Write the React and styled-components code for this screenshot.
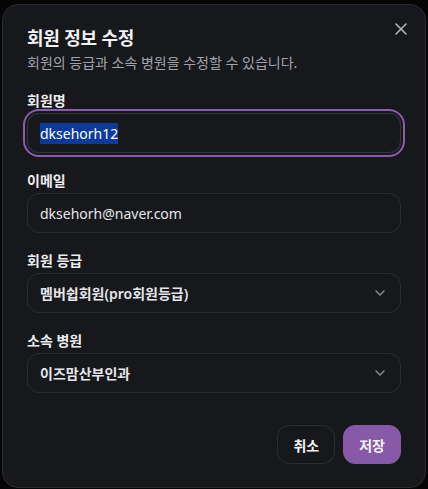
import React from 'react';
import styled, { createGlobalStyle } from 'styled-components';

const GlobalStyle = createGlobalStyle`
  html, body {
    margin: 0;
    padding: 0;
    background: #050506;
  }
  body {
    font-family: "Noto Sans", "Noto Sans CJK KR", sans-serif;
    -webkit-font-smoothing: antialiased;
  }
`;

const Page = styled.div`
  width: 428px;
  height: 489px;
  padding: 4px 2px 0 2px;
  box-sizing: border-box;
  overflow: hidden;
`;

const Dialog = styled.div`
  position: relative;
  box-sizing: border-box;
  width: 424px;
  padding: 24px 24px 23px 24px;
  background: #17181c;
  border: 1px solid #2a2b30;
  border-radius: 16px;
  display: flex;
  flex-direction: column;
`;

const Header = styled.div`
  display: flex;
  flex-direction: column;
  gap: 6px;
  margin-bottom: 18px;
`;

const Title = styled.h2`
  margin: 0;
  height: 18px;
  font-size: 18px;
  line-height: 18px;
  font-weight: 700;
  color: #f2f2f4;
  letter-spacing: -0.2px;
`;

const Subtitle = styled.p`
  margin: 0;
  height: 20px;
  font-size: 14px;
  line-height: 20px;
  color: #a3a3ab;
`;

const CloseButton = styled.button`
  position: absolute;
  top: 14px;
  right: 14px;
  width: 20px;
  height: 20px;
  padding: 0;
  border: none;
  background: transparent;
  color: #b4b4ba;
  display: flex;
  align-items: center;
  justify-content: center;
`;

const Form = styled.div`
  display: flex;
  flex-direction: column;
  gap: 18px;
`;

const Field = styled.div`
  display: flex;
  flex-direction: column;
  gap: 2px;
`;

const Label = styled.label`
  display: block;
  height: 20px;
  font-size: 14px;
  line-height: 20px;
  font-weight: 700;
  color: #ececef;
`;

const Control = styled.div`
  box-sizing: border-box;
  height: 40px;
  padding: 0 12px;
  border: 1px solid ${p => (p.$focused ? '#34353b' : '#2a2b31')};
  border-radius: 12px;
  display: flex;
  align-items: center;
  justify-content: space-between;
  font-size: 14px;
  color: #e6e6ea;
  box-shadow: ${p => (p.$focused ? '0 0 0 2px #17181c, 0 0 0 4px #8a5ca9' : 'none')};
`;

const Value = styled.span`
  white-space: nowrap;
  font-weight: ${p => (p.$bold ? 600 : 400)};
`;

const Selected = styled.span`
  background: #0b3a9c;
  color: #ffffff;
  padding: 1px 0;
`;

const Chevron = styled.svg`
  width: 16px;
  height: 16px;
  color: #8e8e96;
  flex-shrink: 0;
`;

const Footer = styled.div`
  display: flex;
  justify-content: flex-end;
  gap: 8px;
  margin-top: 32px;
`;

const Button = styled.button`
  box-sizing: border-box;
  height: 39px;
  padding: 0 15px;
  border-radius: 12px;
  font-family: inherit;
  font-size: 14px;
  font-weight: 700;
  color: #f4f4f6;
  border: 1px solid ${p => (p.$primary ? '#8759a8' : '#2c2d33')};
  background: ${p => (p.$primary ? '#8759a8' : 'transparent')};
`;

const ChevronIcon = () => (
  <Chevron viewBox="0 0 24 24" fill="none" stroke="currentColor" strokeWidth="2" strokeLinecap="round" strokeLinejoin="round">
    <path d="m6 9 6 6 6-6" />
  </Chevron>
);

export default function App() {
  return (
    <Page>
      <GlobalStyle />
      <Dialog>
        <CloseButton aria-label="닫기">
          <svg width="20" height="20" viewBox="0 0 24 24" fill="none" stroke="currentColor" strokeWidth="1.9" strokeLinecap="round">
            <path d="M18 6 6 18" />
            <path d="m6 6 12 12" />
          </svg>
        </CloseButton>
        <Header>
          <Title>회원 정보 수정</Title>
          <Subtitle>회원의 등급과 소속 병원을 수정할 수 있습니다.</Subtitle>
        </Header>
        <Form>
          <Field>
            <Label>회원명</Label>
            <Control $focused>
              <Value><Selected>dksehorh12</Selected></Value>
            </Control>
          </Field>
          <Field>
            <Label>이메일</Label>
            <Control>
              <Value>dksehorh@naver.com</Value>
            </Control>
          </Field>
          <Field>
            <Label>회원 등급</Label>
            <Control>
              <Value $bold>멤버쉽회원(pro회원등급)</Value>
              <ChevronIcon />
            </Control>
          </Field>
          <Field>
            <Label>소속 병원</Label>
            <Control>
              <Value $bold>이즈맘산부인과</Value>
              <ChevronIcon />
            </Control>
          </Field>
        </Form>
        <Footer>
          <Button>취소</Button>
          <Button $primary>저장</Button>
        </Footer>
      </Dialog>
    </Page>
  );
}
